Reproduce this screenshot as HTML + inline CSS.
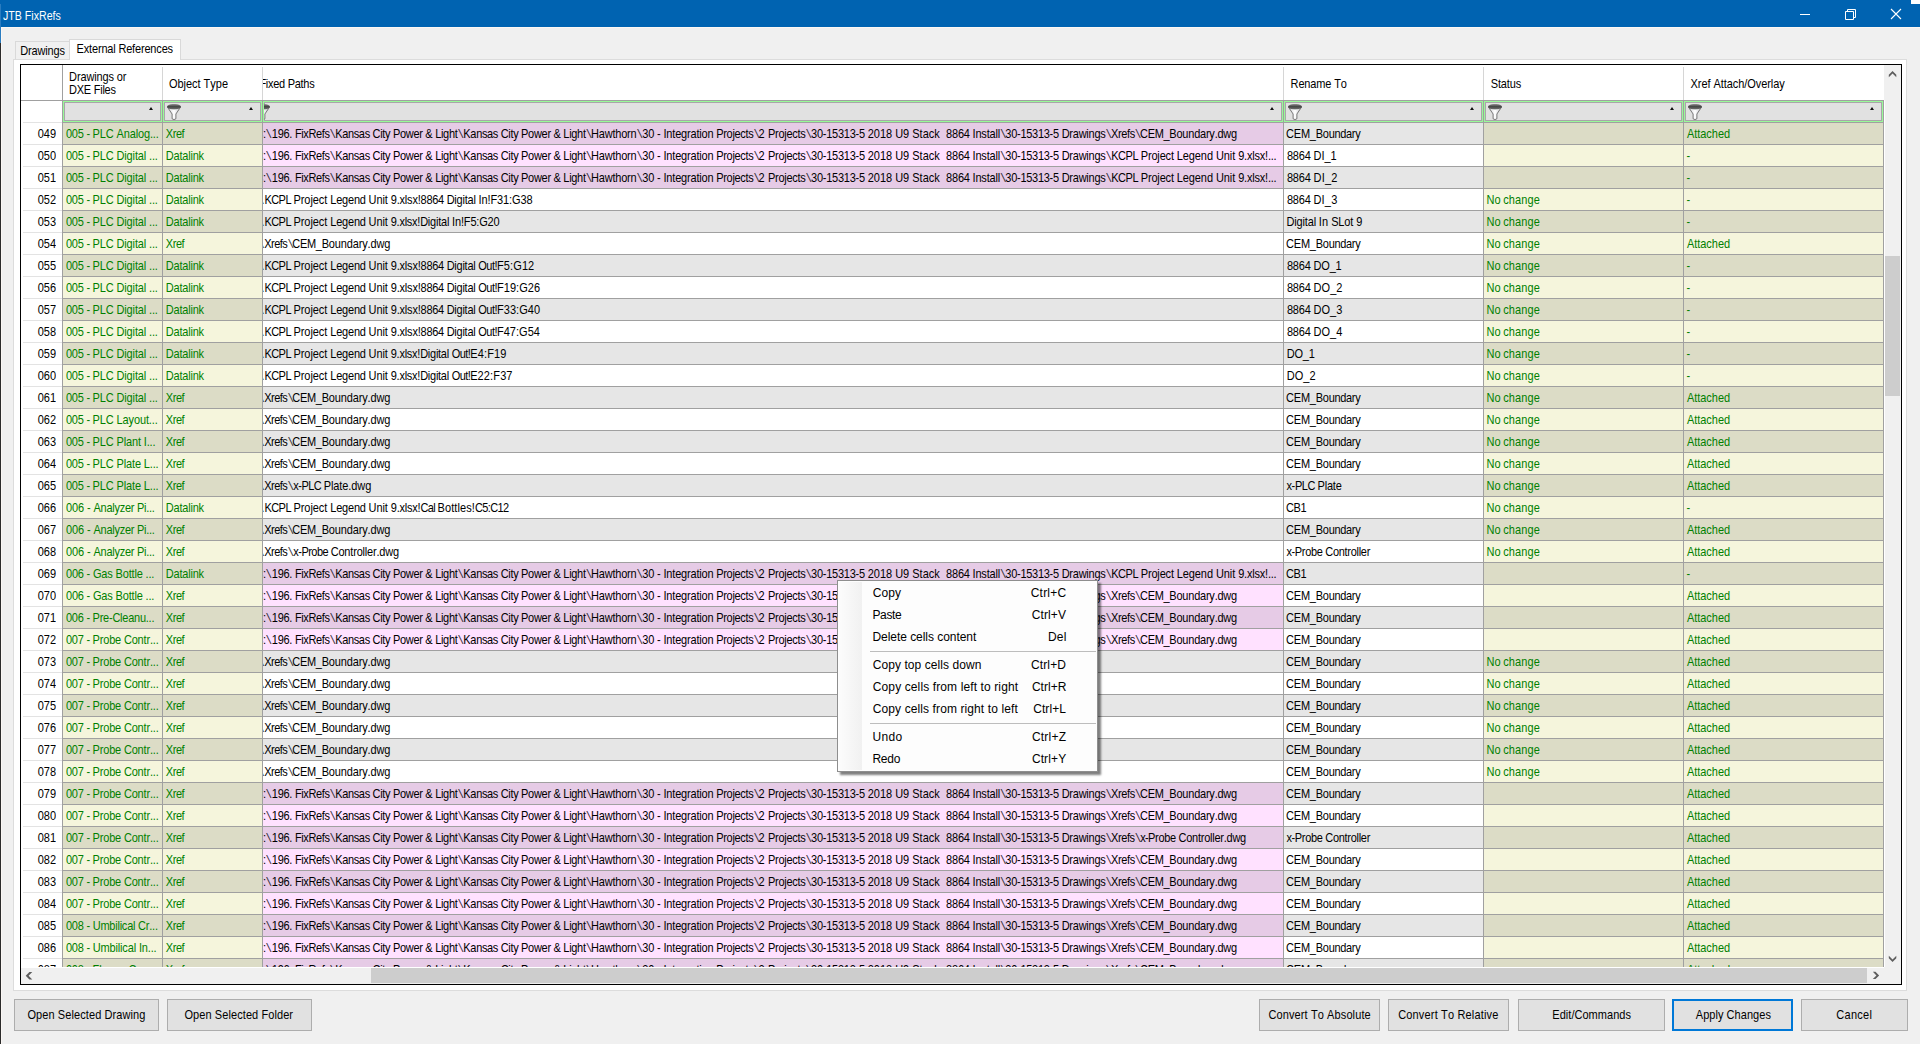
<!DOCTYPE html>
<html lang="en"><head><meta charset="utf-8"><title>JTB FixRefs</title>
<style>
html,body{margin:0;padding:0}
body{width:1920px;height:1044px;position:relative;overflow:hidden;background:#f0f0f0;font:11px "Liberation Sans",sans-serif;color:#000;font-kerning:none}
div,span{box-sizing:border-box}
.a{position:absolute}
#title{left:0;top:0;width:1920px;height:27px;background:#0063b1}
#title .t{top:7px;font-size:12px;line-height:18px;color:#fff;white-space:pre}
.tab{border:1px solid #d9d9d9;border-bottom:none}
.tx{position:absolute;white-space:pre;transform:scaleY(1.14);transform-origin:0 10px}
#page{left:13px;top:59px;width:1894px;height:932px;background:#fff;border:1px solid #dcdcdc}
#grid{left:20px;top:64px;width:1882px;height:921px;border:1px solid #000;background:#fff;overflow:hidden}
.vl{position:absolute;width:1px;background:#a0a0a0}
.hl{position:absolute;height:1px;background:#a0a0a0}
.hd{position:absolute;white-space:pre;line-height:13px;transform:scaleY(1.14);transform-origin:0 10px}
.fc{position:absolute;top:101px;height:21px;border:1px solid #98fb98;background:#e1e1e1;box-shadow:inset 0 0 0 1px #a9a5a9;overflow:hidden}
.fc svg{position:absolute;top:2px}
.fc i{position:absolute;right:8px;top:5px;width:0;height:0;border-left:2px solid transparent;border-right:2px solid transparent;border-bottom:3px solid #111}
.r{position:absolute;left:0;width:1884px;height:22px}
.r>div{position:absolute;top:1px;height:21px;overflow:hidden}
.r>div>b{position:absolute;top:1px;line-height:21px;white-space:pre;font-weight:normal;transform:scaleY(1.14);transform-origin:0 14px}
.r>.n{left:23px;width:39px;top:0;height:22px;border-top:1px solid #e3e3e3}
.n>b{right:6px}
.g{color:#008000}
.r i{font-family:"Liberation Mono",monospace;font-style:normal;opacity:.82}
.c1{left:63px;width:99px}
.c2{left:163px;width:99px}
.c3{left:263px;width:1020px}
.c4{left:1284px;width:199px}
.c5{left:1484px;width:199px}
.c6{left:1684px;width:199px}
.o .c1,.o .c2,.o .c5,.o .c6{background:#dcdcc6}
.e .c1,.e .c2,.e .c5,.e .c6{background:#f5f5dc}
.o .c3,.o .c4{background:#e6e6e6}
.e .c3,.e .c4{background:#fff}
.o .p{background:#e6cbe6}
.e .p{background:#ffe1ff}
.btn{position:absolute;top:999px;height:32px;border:1px solid #adadad;background:#e1e1e1}
.btn b{position:absolute;top:0;line-height:30px;white-space:pre;font-weight:normal;transform:scaleY(1.14);transform-origin:0 19px}
#menu{left:837px;top:580px;width:261px;height:192px;border:1px solid #8e8e8e;background:#fdfdfd;box-shadow:3px 3px 2px 0 rgba(0,0,0,.5);font-size:12px}
#menu .gut{left:1px;top:1px;width:23px;height:188px;background:linear-gradient(90deg,#fcfcfc,#f1f1f1)}
#menu .mi{position:absolute;left:0;width:259px;height:22px;line-height:21px;white-space:pre}
#menu .mi b{position:absolute;top:1px;font-weight:normal}
#menu .sep{position:absolute;left:32px;width:226px;height:1px;background:#bdbdbd}
</style></head>
<body>
<div id="title" class="a"><div class="a t" style="left:2.6px;transform:scaleX(.885);transform-origin:0 0">JTB FixRefs</div>
<svg class="a" style="left:1790px;top:0" width="130" height="27" viewBox="1790 0 130 27" fill="none" stroke="#fff" stroke-width="1"><path d="M1800 14.5h10"/><path d="M1845.5 11.5h8v8h-8z"/><path d="M1847.5 11.5v-2h8v8h-2"/><path d="M1891 9l10 10M1901 9l-10 10" stroke-width="1.1"/><rect x="1911" y="0" width="9" height="4" fill="#fff" stroke="none"/></svg>
</div>
<div class="a" style="left:0;top:4px;width:1px;height:39px;background:#2a7cc0"></div><div class="a" style="left:0;top:43px;width:1px;height:1001px;background:#2b2b2b"></div>
<div class="a" style="left:1px;top:27px;width:1919px;height:1px;background:#fbf7f4"></div><div class="a" style="left:1px;top:27px;width:1px;height:1017px;background:#fbf7f4"></div>
<div id="page" class="a"></div>
<div class="a tab" style="left:15px;top:41px;width:55px;height:18px;background:#f0f0f0"></div><div class="a tab" style="left:69px;top:39px;width:112px;height:21px;background:#fff"></div>
<div class="tx" style="left:20.35px;top:45px;line-height:13px"><span style="letter-spacing:-0.175px">Drawings</span></div><div class="tx" style="left:76.60px;top:43px;line-height:13px"><span style="letter-spacing:-0.177px">External References</span></div>
<div id="grid" class="a"></div>
<div class="a" style="left:0;top:0;width:1884px;height:967px;overflow:hidden">
<div class="hd" style="left:69.10px;top:71px"><span style="letter-spacing:-0.145px">Drawings or</span></div><div class="hd" style="left:69.10px;top:84px"><span style="letter-spacing:-0.255px">DXE Files</span></div><div class="hd" style="left:168.88px;top:78px"><span style="letter-spacing:-0.017px">Object Type</span></div><div class="a" style="left:263px;top:66px;width:1020px;height:34px;overflow:hidden"><div class="hd" style="left:-3.57px;top:12px"><span style="letter-spacing:-0.283px">Fixed Paths</span></div></div><div class="hd" style="left:1290.60px;top:78px"><span style="letter-spacing:-0.151px">Rename To</span></div><div class="hd" style="left:1490.75px;top:78px"><span style="letter-spacing:-0.156px">Status</span></div><div class="hd" style="left:1690.55px;top:78px"><span style="letter-spacing:-0.063px">Xref Attach/Overlay</span></div>
<div class="vl" style="left:162px;top:67px;height:33px;background:#d6d6d6"></div><div class="vl" style="left:262px;top:67px;height:33px;background:#d6d6d6"></div><div class="vl" style="left:1283px;top:67px;height:33px;background:#d6d6d6"></div><div class="vl" style="left:1483px;top:67px;height:33px;background:#d6d6d6"></div><div class="vl" style="left:1683px;top:67px;height:33px;background:#d6d6d6"></div>
<div class="fc" style="left:63px;width:99px"><i></i></div><div class="fc" style="left:163px;width:99px"><svg width="14" height="16" viewBox="0 0 14 16" style="left:3px"><defs><linearGradient id="fg1" x1="0" y1="0" x2="0" y2="1"><stop offset="0" stop-color="#939393"/><stop offset=".45" stop-color="#484848"/><stop offset=".8" stop-color="#5c5c5c"/><stop offset="1" stop-color="#8e8e8e"/></linearGradient><linearGradient id="fh1" x1="0" y1="0" x2="1" y2="0"><stop offset="0" stop-color="#cfcfd4"/><stop offset=".5" stop-color="#ffffff"/><stop offset="1" stop-color="#c4c4ca"/></linearGradient></defs><path d="M0.5 3.2 L5.1 10 L5.1 14.8 Q7 16.4 8.9 14.8 L8.9 10 L13.5 3.2 Z" fill="url(#fh1)" stroke="#6c6c6c" stroke-width=".9"/><ellipse cx="7" cy="2.7" rx="7" ry="2.75" fill="url(#fg1)"/></svg><i></i></div><div class="fc" style="left:263px;width:1020px"><svg width="14" height="16" viewBox="0 0 14 16" style="left:-8px"><defs><linearGradient id="fg2" x1="0" y1="0" x2="0" y2="1"><stop offset="0" stop-color="#939393"/><stop offset=".45" stop-color="#484848"/><stop offset=".8" stop-color="#5c5c5c"/><stop offset="1" stop-color="#8e8e8e"/></linearGradient><linearGradient id="fh2" x1="0" y1="0" x2="1" y2="0"><stop offset="0" stop-color="#cfcfd4"/><stop offset=".5" stop-color="#ffffff"/><stop offset="1" stop-color="#c4c4ca"/></linearGradient></defs><path d="M0.5 3.2 L5.1 10 L5.1 14.8 Q7 16.4 8.9 14.8 L8.9 10 L13.5 3.2 Z" fill="url(#fh2)" stroke="#6c6c6c" stroke-width=".9"/><ellipse cx="7" cy="2.7" rx="7" ry="2.75" fill="url(#fg2)"/></svg><i></i></div><div class="fc" style="left:1284px;width:199px"><svg width="14" height="16" viewBox="0 0 14 16" style="left:3px"><defs><linearGradient id="fg3" x1="0" y1="0" x2="0" y2="1"><stop offset="0" stop-color="#939393"/><stop offset=".45" stop-color="#484848"/><stop offset=".8" stop-color="#5c5c5c"/><stop offset="1" stop-color="#8e8e8e"/></linearGradient><linearGradient id="fh3" x1="0" y1="0" x2="1" y2="0"><stop offset="0" stop-color="#cfcfd4"/><stop offset=".5" stop-color="#ffffff"/><stop offset="1" stop-color="#c4c4ca"/></linearGradient></defs><path d="M0.5 3.2 L5.1 10 L5.1 14.8 Q7 16.4 8.9 14.8 L8.9 10 L13.5 3.2 Z" fill="url(#fh3)" stroke="#6c6c6c" stroke-width=".9"/><ellipse cx="7" cy="2.7" rx="7" ry="2.75" fill="url(#fg3)"/></svg><i></i></div><div class="fc" style="left:1484px;width:199px"><svg width="14" height="16" viewBox="0 0 14 16" style="left:3px"><defs><linearGradient id="fg4" x1="0" y1="0" x2="0" y2="1"><stop offset="0" stop-color="#939393"/><stop offset=".45" stop-color="#484848"/><stop offset=".8" stop-color="#5c5c5c"/><stop offset="1" stop-color="#8e8e8e"/></linearGradient><linearGradient id="fh4" x1="0" y1="0" x2="1" y2="0"><stop offset="0" stop-color="#cfcfd4"/><stop offset=".5" stop-color="#ffffff"/><stop offset="1" stop-color="#c4c4ca"/></linearGradient></defs><path d="M0.5 3.2 L5.1 10 L5.1 14.8 Q7 16.4 8.9 14.8 L8.9 10 L13.5 3.2 Z" fill="url(#fh4)" stroke="#6c6c6c" stroke-width=".9"/><ellipse cx="7" cy="2.7" rx="7" ry="2.75" fill="url(#fg4)"/></svg><i></i></div><div class="fc" style="left:1684px;width:199px"><svg width="14" height="16" viewBox="0 0 14 16" style="left:3px"><defs><linearGradient id="fg5" x1="0" y1="0" x2="0" y2="1"><stop offset="0" stop-color="#939393"/><stop offset=".45" stop-color="#484848"/><stop offset=".8" stop-color="#5c5c5c"/><stop offset="1" stop-color="#8e8e8e"/></linearGradient><linearGradient id="fh5" x1="0" y1="0" x2="1" y2="0"><stop offset="0" stop-color="#cfcfd4"/><stop offset=".5" stop-color="#ffffff"/><stop offset="1" stop-color="#c4c4ca"/></linearGradient></defs><path d="M0.5 3.2 L5.1 10 L5.1 14.8 Q7 16.4 8.9 14.8 L8.9 10 L13.5 3.2 Z" fill="url(#fh5)" stroke="#6c6c6c" stroke-width=".9"/><ellipse cx="7" cy="2.7" rx="7" ry="2.75" fill="url(#fg5)"/></svg><i></i></div>
<div class="r o" style="top:122px"><div class="n"><b>049</b></div><div class="c1 g"><b style="left:2.97px"><span style="letter-spacing:-0.250px">005 - </span><span style="letter-spacing:-0.144px">PLC Analog...</span></b></div><div class="c2 g"><b style="left:2.75px"><span style="letter-spacing:-0.423px">Xref</span></b></div><div class="c3 p"><b style="left:-7.48px"><span style="letter-spacing:-0.469px">C:</span><span style="letter-spacing:-0.421px"><i>\</i></span><span style="letter-spacing:-0.266px">196. </span><span style="letter-spacing:-0.371px">FixRefs</span><span style="letter-spacing:-1.086px"><i>\</i></span><span style="letter-spacing:-0.333px">Kansas City </span><span style="letter-spacing:-0.296px">Power &amp; Light</span><span style="letter-spacing:-0.786px"><i>\</i></span><span style="letter-spacing:-0.337px">Kansas City </span><span style="letter-spacing:-0.296px">Power &amp; Light</span><span style="letter-spacing:-1.236px"><i>\</i></span><span style="letter-spacing:-0.224px">Hawthorn</span><span style="letter-spacing:-0.702px"><i>\</i></span><span style="letter-spacing:-0.161px">30 - </span><span style="letter-spacing:-0.194px">Integration </span><span style="letter-spacing:-0.306px">Projects</span><span style="letter-spacing:-1.537px"><i>\</i></span><span style="letter-spacing:0.114px">2 </span><span style="letter-spacing:-0.275px">Projects</span><span style="letter-spacing:-1.152px"><i>\</i></span><span style="letter-spacing:-0.237px">30-15313-5 </span><span style="letter-spacing:-0.024px">2018 U9 </span><span style="letter-spacing:0.043px">Stack  </span><span style="letter-spacing:-0.208px">8864 Install</span><span style="letter-spacing:-1.202px"><i>\</i></span><span style="letter-spacing:-0.273px">30-15313-5 </span><span style="letter-spacing:-0.233px">Drawings</span><span style="letter-spacing:-1.230px"><i>\</i></span><span style="letter-spacing:-0.369px">Xrefs</span><span style="letter-spacing:-1.442px"><i>\</i></span><span style="letter-spacing:-0.301px">CEM_</span><span style="letter-spacing:-0.226px">Boundary.dwg</span></b></div><div class="c4"><b style="left:2.04px"><span style="letter-spacing:-0.201px">CEM_</span><span style="letter-spacing:-0.308px">Boundary</span></b></div><div class="c5 g"></div><div class="c6 g"><b style="left:2.88px"><span style="letter-spacing:-0.024px">Attached</span></b></div></div>
<div class="r e" style="top:144px"><div class="n"><b>050</b></div><div class="c1 g"><b style="left:2.97px"><span style="letter-spacing:-0.250px">005 - </span><span style="letter-spacing:-0.139px">PLC Digital ...</span></b></div><div class="c2 g"><b style="left:2.85px"><span style="letter-spacing:-0.213px">Datalink</span></b></div><div class="c3 p"><b style="left:-7.48px"><span style="letter-spacing:-0.469px">C:</span><span style="letter-spacing:-0.421px"><i>\</i></span><span style="letter-spacing:-0.266px">196. </span><span style="letter-spacing:-0.371px">FixRefs</span><span style="letter-spacing:-1.086px"><i>\</i></span><span style="letter-spacing:-0.333px">Kansas City </span><span style="letter-spacing:-0.296px">Power &amp; Light</span><span style="letter-spacing:-0.786px"><i>\</i></span><span style="letter-spacing:-0.337px">Kansas City </span><span style="letter-spacing:-0.296px">Power &amp; Light</span><span style="letter-spacing:-1.236px"><i>\</i></span><span style="letter-spacing:-0.224px">Hawthorn</span><span style="letter-spacing:-0.702px"><i>\</i></span><span style="letter-spacing:-0.161px">30 - </span><span style="letter-spacing:-0.194px">Integration </span><span style="letter-spacing:-0.306px">Projects</span><span style="letter-spacing:-1.537px"><i>\</i></span><span style="letter-spacing:0.114px">2 </span><span style="letter-spacing:-0.275px">Projects</span><span style="letter-spacing:-1.152px"><i>\</i></span><span style="letter-spacing:-0.237px">30-15313-5 </span><span style="letter-spacing:-0.024px">2018 U9 </span><span style="letter-spacing:0.043px">Stack  </span><span style="letter-spacing:-0.208px">8864 Install</span><span style="letter-spacing:-1.202px"><i>\</i></span><span style="letter-spacing:-0.273px">30-15313-5 </span><span style="letter-spacing:-0.233px">Drawings</span><span style="letter-spacing:-1.086px"><i>\</i></span><span style="letter-spacing:-0.438px">KCPL </span><span style="letter-spacing:-0.161px">Project </span><span style="letter-spacing:-0.087px">Legend </span><span style="letter-spacing:-0.077px">Unit </span><span style="letter-spacing:-0.202px">9.xlsx!...</span></b></div><div class="c4"><b style="left:2.92px"><span style="letter-spacing:-0.190px">8864 </span><span style="letter-spacing:-0.049px">DI_1</span></b></div><div class="c5 g"></div><div class="c6 g"><b style="left:2.51px"><span style="letter-spacing:0.314px">-</span></b></div></div>
<div class="r o" style="top:166px"><div class="n"><b>051</b></div><div class="c1 g"><b style="left:2.97px"><span style="letter-spacing:-0.250px">005 - </span><span style="letter-spacing:-0.139px">PLC Digital ...</span></b></div><div class="c2 g"><b style="left:2.85px"><span style="letter-spacing:-0.213px">Datalink</span></b></div><div class="c3 p"><b style="left:-7.48px"><span style="letter-spacing:-0.469px">C:</span><span style="letter-spacing:-0.421px"><i>\</i></span><span style="letter-spacing:-0.266px">196. </span><span style="letter-spacing:-0.371px">FixRefs</span><span style="letter-spacing:-1.086px"><i>\</i></span><span style="letter-spacing:-0.333px">Kansas City </span><span style="letter-spacing:-0.296px">Power &amp; Light</span><span style="letter-spacing:-0.786px"><i>\</i></span><span style="letter-spacing:-0.337px">Kansas City </span><span style="letter-spacing:-0.296px">Power &amp; Light</span><span style="letter-spacing:-1.236px"><i>\</i></span><span style="letter-spacing:-0.224px">Hawthorn</span><span style="letter-spacing:-0.702px"><i>\</i></span><span style="letter-spacing:-0.161px">30 - </span><span style="letter-spacing:-0.194px">Integration </span><span style="letter-spacing:-0.306px">Projects</span><span style="letter-spacing:-1.537px"><i>\</i></span><span style="letter-spacing:0.114px">2 </span><span style="letter-spacing:-0.275px">Projects</span><span style="letter-spacing:-1.152px"><i>\</i></span><span style="letter-spacing:-0.237px">30-15313-5 </span><span style="letter-spacing:-0.024px">2018 U9 </span><span style="letter-spacing:0.043px">Stack  </span><span style="letter-spacing:-0.208px">8864 Install</span><span style="letter-spacing:-1.202px"><i>\</i></span><span style="letter-spacing:-0.273px">30-15313-5 </span><span style="letter-spacing:-0.233px">Drawings</span><span style="letter-spacing:-1.086px"><i>\</i></span><span style="letter-spacing:-0.438px">KCPL </span><span style="letter-spacing:-0.161px">Project </span><span style="letter-spacing:-0.087px">Legend </span><span style="letter-spacing:-0.077px">Unit </span><span style="letter-spacing:-0.202px">9.xlsx!...</span></b></div><div class="c4"><b style="left:2.92px"><span style="letter-spacing:-0.190px">8864 </span><span style="letter-spacing:0.205px">DI_2</span></b></div><div class="c5 g"></div><div class="c6 g"><b style="left:2.51px"><span style="letter-spacing:0.314px">-</span></b></div></div>
<div class="r e" style="top:188px"><div class="n"><b>052</b></div><div class="c1 g"><b style="left:2.97px"><span style="letter-spacing:-0.250px">005 - </span><span style="letter-spacing:-0.139px">PLC Digital ...</span></b></div><div class="c2 g"><b style="left:2.85px"><span style="letter-spacing:-0.213px">Datalink</span></b></div><div class="c3"><b style="left:-11.36px"><span style="letter-spacing:0.014px">..<i>\</i></span><span style="letter-spacing:-0.538px">KCPL </span><span style="letter-spacing:-0.074px">Project </span><span style="letter-spacing:-0.201px">Legend </span><span style="letter-spacing:-0.087px">Unit </span><span style="letter-spacing:-0.198px">9.xlsx!</span><span style="letter-spacing:-0.290px">8864 </span><span style="letter-spacing:-0.217px">Digital </span><span style="letter-spacing:-0.122px">In!</span><span style="letter-spacing:-0.110px">F31:G38</span></b></div><div class="c4"><b style="left:2.92px"><span style="letter-spacing:-0.190px">8864 </span><span style="letter-spacing:0.188px">DI_3</span></b></div><div class="c5 g"><b style="left:2.60px"><span style="letter-spacing:-0.144px">No </span><span style="letter-spacing:0.086px">change</span></b></div><div class="c6 g"><b style="left:2.51px"><span style="letter-spacing:0.314px">-</span></b></div></div>
<div class="r o" style="top:210px"><div class="n"><b>053</b></div><div class="c1 g"><b style="left:2.97px"><span style="letter-spacing:-0.250px">005 - </span><span style="letter-spacing:-0.139px">PLC Digital ...</span></b></div><div class="c2 g"><b style="left:2.85px"><span style="letter-spacing:-0.213px">Datalink</span></b></div><div class="c3"><b style="left:-11.36px"><span style="letter-spacing:0.014px">..<i>\</i></span><span style="letter-spacing:-0.538px">KCPL </span><span style="letter-spacing:-0.074px">Project </span><span style="letter-spacing:-0.201px">Legend </span><span style="letter-spacing:-0.087px">Unit </span><span style="letter-spacing:-0.259px">9.xlsx!</span><span style="letter-spacing:-0.217px">Digital </span><span style="letter-spacing:-0.139px">In!</span><span style="letter-spacing:-0.175px">F5:G20</span></b></div><div class="c4"><b style="left:2.60px"><span style="letter-spacing:-0.179px">Digital </span><span style="letter-spacing:0.029px">In </span><span style="letter-spacing:-0.130px">SLot 9</span></b></div><div class="c5 g"><b style="left:2.60px"><span style="letter-spacing:-0.144px">No </span><span style="letter-spacing:0.086px">change</span></b></div><div class="c6 g"><b style="left:2.51px"><span style="letter-spacing:0.314px">-</span></b></div></div>
<div class="r e" style="top:232px"><div class="n"><b>054</b></div><div class="c1 g"><b style="left:2.97px"><span style="letter-spacing:-0.250px">005 - </span><span style="letter-spacing:-0.139px">PLC Digital ...</span></b></div><div class="c2 g"><b style="left:2.75px"><span style="letter-spacing:-0.423px">Xref</span></b></div><div class="c3"><b style="left:-7.58px"><span style="letter-spacing:-0.481px">.<i>\</i>Xrefs</span><span style="letter-spacing:-1.742px"><i>\</i></span><span style="letter-spacing:-0.301px">CEM_</span><span style="letter-spacing:-0.151px">Boundary.dwg</span></b></div><div class="c4"><b style="left:2.04px"><span style="letter-spacing:-0.201px">CEM_</span><span style="letter-spacing:-0.308px">Boundary</span></b></div><div class="c5 g"><b style="left:2.60px"><span style="letter-spacing:-0.144px">No </span><span style="letter-spacing:0.086px">change</span></b></div><div class="c6 g"><b style="left:2.88px"><span style="letter-spacing:-0.024px">Attached</span></b></div></div>
<div class="r o" style="top:254px"><div class="n"><b>055</b></div><div class="c1 g"><b style="left:2.97px"><span style="letter-spacing:-0.250px">005 - </span><span style="letter-spacing:-0.139px">PLC Digital ...</span></b></div><div class="c2 g"><b style="left:2.85px"><span style="letter-spacing:-0.213px">Datalink</span></b></div><div class="c3"><b style="left:-11.36px"><span style="letter-spacing:0.014px">..<i>\</i></span><span style="letter-spacing:-0.538px">KCPL </span><span style="letter-spacing:-0.074px">Project </span><span style="letter-spacing:-0.201px">Legend </span><span style="letter-spacing:-0.087px">Unit </span><span style="letter-spacing:-0.198px">9.xlsx!</span><span style="letter-spacing:-0.290px">8864 </span><span style="letter-spacing:-0.249px">Digital </span><span style="letter-spacing:-0.529px">Out!</span><span style="letter-spacing:0.120px">F5:G12</span></b></div><div class="c4"><b style="left:2.92px"><span style="letter-spacing:-0.190px">8864 </span><span style="letter-spacing:-0.174px">DO_1</span></b></div><div class="c5 g"><b style="left:2.60px"><span style="letter-spacing:-0.144px">No </span><span style="letter-spacing:0.086px">change</span></b></div><div class="c6 g"><b style="left:2.51px"><span style="letter-spacing:0.314px">-</span></b></div></div>
<div class="r e" style="top:276px"><div class="n"><b>056</b></div><div class="c1 g"><b style="left:2.97px"><span style="letter-spacing:-0.250px">005 - </span><span style="letter-spacing:-0.139px">PLC Digital ...</span></b></div><div class="c2 g"><b style="left:2.85px"><span style="letter-spacing:-0.213px">Datalink</span></b></div><div class="c3"><b style="left:-11.36px"><span style="letter-spacing:0.014px">..<i>\</i></span><span style="letter-spacing:-0.538px">KCPL </span><span style="letter-spacing:-0.074px">Project </span><span style="letter-spacing:-0.201px">Legend </span><span style="letter-spacing:-0.087px">Unit </span><span style="letter-spacing:-0.198px">9.xlsx!</span><span style="letter-spacing:-0.290px">8864 </span><span style="letter-spacing:-0.249px">Digital </span><span style="letter-spacing:-0.529px">Out!</span><span style="letter-spacing:0.055px">F19:G26</span></b></div><div class="c4"><b style="left:2.92px"><span style="letter-spacing:-0.190px">8864 </span><span style="letter-spacing:0.080px">DO_2</span></b></div><div class="c5 g"><b style="left:2.60px"><span style="letter-spacing:-0.144px">No </span><span style="letter-spacing:0.086px">change</span></b></div><div class="c6 g"><b style="left:2.51px"><span style="letter-spacing:0.314px">-</span></b></div></div>
<div class="r o" style="top:298px"><div class="n"><b>057</b></div><div class="c1 g"><b style="left:2.97px"><span style="letter-spacing:-0.250px">005 - </span><span style="letter-spacing:-0.139px">PLC Digital ...</span></b></div><div class="c2 g"><b style="left:2.85px"><span style="letter-spacing:-0.213px">Datalink</span></b></div><div class="c3"><b style="left:-11.36px"><span style="letter-spacing:0.014px">..<i>\</i></span><span style="letter-spacing:-0.538px">KCPL </span><span style="letter-spacing:-0.074px">Project </span><span style="letter-spacing:-0.201px">Legend </span><span style="letter-spacing:-0.087px">Unit </span><span style="letter-spacing:-0.198px">9.xlsx!</span><span style="letter-spacing:-0.290px">8864 </span><span style="letter-spacing:-0.249px">Digital </span><span style="letter-spacing:-0.529px">Out!</span><span style="letter-spacing:0.047px">F33:G40</span></b></div><div class="c4"><b style="left:2.92px"><span style="letter-spacing:-0.190px">8864 </span><span style="letter-spacing:0.063px">DO_3</span></b></div><div class="c5 g"><b style="left:2.60px"><span style="letter-spacing:-0.144px">No </span><span style="letter-spacing:0.086px">change</span></b></div><div class="c6 g"><b style="left:2.51px"><span style="letter-spacing:0.314px">-</span></b></div></div>
<div class="r e" style="top:320px"><div class="n"><b>058</b></div><div class="c1 g"><b style="left:2.97px"><span style="letter-spacing:-0.250px">005 - </span><span style="letter-spacing:-0.139px">PLC Digital ...</span></b></div><div class="c2 g"><b style="left:2.85px"><span style="letter-spacing:-0.213px">Datalink</span></b></div><div class="c3"><b style="left:-11.36px"><span style="letter-spacing:0.014px">..<i>\</i></span><span style="letter-spacing:-0.538px">KCPL </span><span style="letter-spacing:-0.074px">Project </span><span style="letter-spacing:-0.201px">Legend </span><span style="letter-spacing:-0.087px">Unit </span><span style="letter-spacing:-0.198px">9.xlsx!</span><span style="letter-spacing:-0.290px">8864 </span><span style="letter-spacing:-0.249px">Digital </span><span style="letter-spacing:-0.529px">Out!</span><span style="letter-spacing:0.032px">F47:G54</span></b></div><div class="c4"><b style="left:2.92px"><span style="letter-spacing:-0.190px">8864 </span><span style="letter-spacing:0.022px">DO_4</span></b></div><div class="c5 g"><b style="left:2.60px"><span style="letter-spacing:-0.144px">No </span><span style="letter-spacing:0.086px">change</span></b></div><div class="c6 g"><b style="left:2.51px"><span style="letter-spacing:0.314px">-</span></b></div></div>
<div class="r o" style="top:342px"><div class="n"><b>059</b></div><div class="c1 g"><b style="left:2.97px"><span style="letter-spacing:-0.250px">005 - </span><span style="letter-spacing:-0.139px">PLC Digital ...</span></b></div><div class="c2 g"><b style="left:2.85px"><span style="letter-spacing:-0.213px">Datalink</span></b></div><div class="c3"><b style="left:-11.36px"><span style="letter-spacing:0.014px">..<i>\</i></span><span style="letter-spacing:-0.538px">KCPL </span><span style="letter-spacing:-0.074px">Project </span><span style="letter-spacing:-0.201px">Legend </span><span style="letter-spacing:-0.087px">Unit </span><span style="letter-spacing:-0.259px">9.xlsx!</span><span style="letter-spacing:-0.255px">Digital </span><span style="letter-spacing:-0.592px">Out!</span><span style="letter-spacing:0.160px">E4:F19</span></b></div><div class="c4"><b style="left:2.70px"><span style="letter-spacing:-0.224px">DO_1</span></b></div><div class="c5 g"><b style="left:2.60px"><span style="letter-spacing:-0.144px">No </span><span style="letter-spacing:0.086px">change</span></b></div><div class="c6 g"><b style="left:2.51px"><span style="letter-spacing:0.314px">-</span></b></div></div>
<div class="r e" style="top:364px"><div class="n"><b>060</b></div><div class="c1 g"><b style="left:2.97px"><span style="letter-spacing:-0.250px">005 - </span><span style="letter-spacing:-0.139px">PLC Digital ...</span></b></div><div class="c2 g"><b style="left:2.85px"><span style="letter-spacing:-0.213px">Datalink</span></b></div><div class="c3"><b style="left:-11.36px"><span style="letter-spacing:0.014px">..<i>\</i></span><span style="letter-spacing:-0.538px">KCPL </span><span style="letter-spacing:-0.074px">Project </span><span style="letter-spacing:-0.201px">Legend </span><span style="letter-spacing:-0.087px">Unit </span><span style="letter-spacing:-0.259px">9.xlsx!</span><span style="letter-spacing:-0.255px">Digital </span><span style="letter-spacing:-0.592px">Out!</span><span style="letter-spacing:0.125px">E22:F37</span></b></div><div class="c4"><b style="left:2.70px"><span style="letter-spacing:0.030px">DO_2</span></b></div><div class="c5 g"><b style="left:2.60px"><span style="letter-spacing:-0.144px">No </span><span style="letter-spacing:0.086px">change</span></b></div><div class="c6 g"><b style="left:2.51px"><span style="letter-spacing:0.314px">-</span></b></div></div>
<div class="r o" style="top:386px"><div class="n"><b>061</b></div><div class="c1 g"><b style="left:2.97px"><span style="letter-spacing:-0.250px">005 - </span><span style="letter-spacing:-0.139px">PLC Digital ...</span></b></div><div class="c2 g"><b style="left:2.75px"><span style="letter-spacing:-0.423px">Xref</span></b></div><div class="c3"><b style="left:-7.58px"><span style="letter-spacing:-0.481px">.<i>\</i>Xrefs</span><span style="letter-spacing:-1.742px"><i>\</i></span><span style="letter-spacing:-0.301px">CEM_</span><span style="letter-spacing:-0.151px">Boundary.dwg</span></b></div><div class="c4"><b style="left:2.04px"><span style="letter-spacing:-0.201px">CEM_</span><span style="letter-spacing:-0.308px">Boundary</span></b></div><div class="c5 g"><b style="left:2.60px"><span style="letter-spacing:-0.144px">No </span><span style="letter-spacing:0.086px">change</span></b></div><div class="c6 g"><b style="left:2.88px"><span style="letter-spacing:-0.024px">Attached</span></b></div></div>
<div class="r e" style="top:408px"><div class="n"><b>062</b></div><div class="c1 g"><b style="left:2.97px"><span style="letter-spacing:-0.250px">005 - </span><span style="letter-spacing:-0.126px">PLC Layout...</span></b></div><div class="c2 g"><b style="left:2.75px"><span style="letter-spacing:-0.423px">Xref</span></b></div><div class="c3"><b style="left:-7.58px"><span style="letter-spacing:-0.481px">.<i>\</i>Xrefs</span><span style="letter-spacing:-1.742px"><i>\</i></span><span style="letter-spacing:-0.301px">CEM_</span><span style="letter-spacing:-0.151px">Boundary.dwg</span></b></div><div class="c4"><b style="left:2.04px"><span style="letter-spacing:-0.201px">CEM_</span><span style="letter-spacing:-0.308px">Boundary</span></b></div><div class="c5 g"><b style="left:2.60px"><span style="letter-spacing:-0.144px">No </span><span style="letter-spacing:0.086px">change</span></b></div><div class="c6 g"><b style="left:2.88px"><span style="letter-spacing:-0.024px">Attached</span></b></div></div>
<div class="r o" style="top:430px"><div class="n"><b>063</b></div><div class="c1 g"><b style="left:2.97px"><span style="letter-spacing:-0.250px">005 - </span><span style="letter-spacing:-0.143px">PLC Plant I...</span></b></div><div class="c2 g"><b style="left:2.75px"><span style="letter-spacing:-0.423px">Xref</span></b></div><div class="c3"><b style="left:-7.58px"><span style="letter-spacing:-0.481px">.<i>\</i>Xrefs</span><span style="letter-spacing:-1.742px"><i>\</i></span><span style="letter-spacing:-0.301px">CEM_</span><span style="letter-spacing:-0.151px">Boundary.dwg</span></b></div><div class="c4"><b style="left:2.04px"><span style="letter-spacing:-0.201px">CEM_</span><span style="letter-spacing:-0.308px">Boundary</span></b></div><div class="c5 g"><b style="left:2.60px"><span style="letter-spacing:-0.144px">No </span><span style="letter-spacing:0.086px">change</span></b></div><div class="c6 g"><b style="left:2.88px"><span style="letter-spacing:-0.024px">Attached</span></b></div></div>
<div class="r e" style="top:452px"><div class="n"><b>064</b></div><div class="c1 g"><b style="left:2.97px"><span style="letter-spacing:-0.250px">005 - </span><span style="letter-spacing:-0.140px">PLC Plate L...</span></b></div><div class="c2 g"><b style="left:2.75px"><span style="letter-spacing:-0.423px">Xref</span></b></div><div class="c3"><b style="left:-7.58px"><span style="letter-spacing:-0.481px">.<i>\</i>Xrefs</span><span style="letter-spacing:-1.742px"><i>\</i></span><span style="letter-spacing:-0.301px">CEM_</span><span style="letter-spacing:-0.151px">Boundary.dwg</span></b></div><div class="c4"><b style="left:2.04px"><span style="letter-spacing:-0.201px">CEM_</span><span style="letter-spacing:-0.308px">Boundary</span></b></div><div class="c5 g"><b style="left:2.60px"><span style="letter-spacing:-0.144px">No </span><span style="letter-spacing:0.086px">change</span></b></div><div class="c6 g"><b style="left:2.88px"><span style="letter-spacing:-0.024px">Attached</span></b></div></div>
<div class="r o" style="top:474px"><div class="n"><b>065</b></div><div class="c1 g"><b style="left:2.97px"><span style="letter-spacing:-0.250px">005 - </span><span style="letter-spacing:-0.140px">PLC Plate L...</span></b></div><div class="c2 g"><b style="left:2.75px"><span style="letter-spacing:-0.423px">Xref</span></b></div><div class="c3"><b style="left:-7.58px"><span style="letter-spacing:-0.481px">.<i>\</i>Xrefs</span><span style="letter-spacing:-0.707px"><i>\</i></span><span style="letter-spacing:-0.549px">x-PLC </span><span style="letter-spacing:-0.077px">Plate.dwg</span></b></div><div class="c4"><b style="left:2.38px"><span style="letter-spacing:-0.321px">x-</span><span style="letter-spacing:-0.439px">PLC </span><span style="letter-spacing:-0.216px">Plate</span></b></div><div class="c5 g"><b style="left:2.60px"><span style="letter-spacing:-0.144px">No </span><span style="letter-spacing:0.086px">change</span></b></div><div class="c6 g"><b style="left:2.88px"><span style="letter-spacing:-0.024px">Attached</span></b></div></div>
<div class="r e" style="top:496px"><div class="n"><b>066</b></div><div class="c1 g"><b style="left:2.97px"><span style="letter-spacing:-0.103px">006 - </span><span style="letter-spacing:-0.270px">Analyzer Pi...</span></b></div><div class="c2 g"><b style="left:2.85px"><span style="letter-spacing:-0.213px">Datalink</span></b></div><div class="c3"><b style="left:-11.36px"><span style="letter-spacing:0.014px">..<i>\</i></span><span style="letter-spacing:-0.538px">KCPL </span><span style="letter-spacing:-0.074px">Project </span><span style="letter-spacing:-0.201px">Legend </span><span style="letter-spacing:-0.087px">Unit </span><span style="letter-spacing:-0.210px">9.xlsx!</span><span style="letter-spacing:-0.626px">Cal </span><span style="letter-spacing:0.095px">Bottles!</span><span style="letter-spacing:-0.614px">C5:C12</span></b></div><div class="c4"><b style="left:1.94px"><span style="letter-spacing:-0.334px">CB1</span></b></div><div class="c5 g"><b style="left:2.60px"><span style="letter-spacing:-0.144px">No </span><span style="letter-spacing:0.086px">change</span></b></div><div class="c6 g"><b style="left:2.51px"><span style="letter-spacing:0.314px">-</span></b></div></div>
<div class="r o" style="top:518px"><div class="n"><b>067</b></div><div class="c1 g"><b style="left:2.97px"><span style="letter-spacing:-0.103px">006 - </span><span style="letter-spacing:-0.270px">Analyzer Pi...</span></b></div><div class="c2 g"><b style="left:2.75px"><span style="letter-spacing:-0.423px">Xref</span></b></div><div class="c3"><b style="left:-7.58px"><span style="letter-spacing:-0.481px">.<i>\</i>Xrefs</span><span style="letter-spacing:-1.742px"><i>\</i></span><span style="letter-spacing:-0.301px">CEM_</span><span style="letter-spacing:-0.151px">Boundary.dwg</span></b></div><div class="c4"><b style="left:2.04px"><span style="letter-spacing:-0.201px">CEM_</span><span style="letter-spacing:-0.308px">Boundary</span></b></div><div class="c5 g"><b style="left:2.60px"><span style="letter-spacing:-0.144px">No </span><span style="letter-spacing:0.086px">change</span></b></div><div class="c6 g"><b style="left:2.88px"><span style="letter-spacing:-0.024px">Attached</span></b></div></div>
<div class="r e" style="top:540px"><div class="n"><b>068</b></div><div class="c1 g"><b style="left:2.97px"><span style="letter-spacing:-0.103px">006 - </span><span style="letter-spacing:-0.270px">Analyzer Pi...</span></b></div><div class="c2 g"><b style="left:2.75px"><span style="letter-spacing:-0.423px">Xref</span></b></div><div class="c3"><b style="left:-7.58px"><span style="letter-spacing:-0.481px">.<i>\</i>Xrefs</span><span style="letter-spacing:-0.707px"><i>\</i></span><span style="letter-spacing:-0.526px">x-Probe </span><span style="letter-spacing:-0.189px">Controller.dwg</span></b></div><div class="c4"><b style="left:2.38px"><span style="letter-spacing:-0.338px">x-Probe </span><span style="letter-spacing:-0.294px">Controller</span></b></div><div class="c5 g"><b style="left:2.60px"><span style="letter-spacing:-0.144px">No </span><span style="letter-spacing:0.086px">change</span></b></div><div class="c6 g"><b style="left:2.88px"><span style="letter-spacing:-0.024px">Attached</span></b></div></div>
<div class="r o" style="top:562px"><div class="n"><b>069</b></div><div class="c1 g"><b style="left:2.97px"><span style="letter-spacing:-0.192px">006 - </span><span style="letter-spacing:-0.166px">Gas Bottle ...</span></b></div><div class="c2 g"><b style="left:2.85px"><span style="letter-spacing:-0.213px">Datalink</span></b></div><div class="c3 p"><b style="left:-7.48px"><span style="letter-spacing:-0.469px">C:</span><span style="letter-spacing:-0.421px"><i>\</i></span><span style="letter-spacing:-0.266px">196. </span><span style="letter-spacing:-0.371px">FixRefs</span><span style="letter-spacing:-1.086px"><i>\</i></span><span style="letter-spacing:-0.333px">Kansas City </span><span style="letter-spacing:-0.296px">Power &amp; Light</span><span style="letter-spacing:-0.786px"><i>\</i></span><span style="letter-spacing:-0.337px">Kansas City </span><span style="letter-spacing:-0.296px">Power &amp; Light</span><span style="letter-spacing:-1.236px"><i>\</i></span><span style="letter-spacing:-0.224px">Hawthorn</span><span style="letter-spacing:-0.702px"><i>\</i></span><span style="letter-spacing:-0.161px">30 - </span><span style="letter-spacing:-0.194px">Integration </span><span style="letter-spacing:-0.306px">Projects</span><span style="letter-spacing:-1.537px"><i>\</i></span><span style="letter-spacing:0.114px">2 </span><span style="letter-spacing:-0.275px">Projects</span><span style="letter-spacing:-1.152px"><i>\</i></span><span style="letter-spacing:-0.237px">30-15313-5 </span><span style="letter-spacing:-0.024px">2018 U9 </span><span style="letter-spacing:0.043px">Stack  </span><span style="letter-spacing:-0.208px">8864 Install</span><span style="letter-spacing:-1.202px"><i>\</i></span><span style="letter-spacing:-0.273px">30-15313-5 </span><span style="letter-spacing:-0.233px">Drawings</span><span style="letter-spacing:-1.086px"><i>\</i></span><span style="letter-spacing:-0.438px">KCPL </span><span style="letter-spacing:-0.161px">Project </span><span style="letter-spacing:-0.087px">Legend </span><span style="letter-spacing:-0.077px">Unit </span><span style="letter-spacing:-0.202px">9.xlsx!...</span></b></div><div class="c4"><b style="left:1.94px"><span style="letter-spacing:-0.334px">CB1</span></b></div><div class="c5 g"></div><div class="c6 g"><b style="left:2.51px"><span style="letter-spacing:0.314px">-</span></b></div></div>
<div class="r e" style="top:584px"><div class="n"><b>070</b></div><div class="c1 g"><b style="left:2.97px"><span style="letter-spacing:-0.192px">006 - </span><span style="letter-spacing:-0.166px">Gas Bottle ...</span></b></div><div class="c2 g"><b style="left:2.75px"><span style="letter-spacing:-0.423px">Xref</span></b></div><div class="c3 p"><b style="left:-7.48px"><span style="letter-spacing:-0.469px">C:</span><span style="letter-spacing:-0.421px"><i>\</i></span><span style="letter-spacing:-0.266px">196. </span><span style="letter-spacing:-0.371px">FixRefs</span><span style="letter-spacing:-1.086px"><i>\</i></span><span style="letter-spacing:-0.333px">Kansas City </span><span style="letter-spacing:-0.296px">Power &amp; Light</span><span style="letter-spacing:-0.786px"><i>\</i></span><span style="letter-spacing:-0.337px">Kansas City </span><span style="letter-spacing:-0.296px">Power &amp; Light</span><span style="letter-spacing:-1.236px"><i>\</i></span><span style="letter-spacing:-0.224px">Hawthorn</span><span style="letter-spacing:-0.702px"><i>\</i></span><span style="letter-spacing:-0.161px">30 - </span><span style="letter-spacing:-0.194px">Integration </span><span style="letter-spacing:-0.306px">Projects</span><span style="letter-spacing:-1.537px"><i>\</i></span><span style="letter-spacing:0.114px">2 </span><span style="letter-spacing:-0.275px">Projects</span><span style="letter-spacing:-1.152px"><i>\</i></span><span style="letter-spacing:-0.237px">30-15313-5 </span><span style="letter-spacing:-0.024px">2018 U9 </span><span style="letter-spacing:0.043px">Stack  </span><span style="letter-spacing:-0.208px">8864 Install</span><span style="letter-spacing:-1.202px"><i>\</i></span><span style="letter-spacing:-0.273px">30-15313-5 </span><span style="letter-spacing:-0.233px">Drawings</span><span style="letter-spacing:-1.230px"><i>\</i></span><span style="letter-spacing:-0.369px">Xrefs</span><span style="letter-spacing:-1.442px"><i>\</i></span><span style="letter-spacing:-0.301px">CEM_</span><span style="letter-spacing:-0.226px">Boundary.dwg</span></b></div><div class="c4"><b style="left:2.04px"><span style="letter-spacing:-0.201px">CEM_</span><span style="letter-spacing:-0.308px">Boundary</span></b></div><div class="c5 g"></div><div class="c6 g"><b style="left:2.88px"><span style="letter-spacing:-0.024px">Attached</span></b></div></div>
<div class="r o" style="top:606px"><div class="n"><b>071</b></div><div class="c1 g"><b style="left:2.97px"><span style="letter-spacing:-0.250px">006 - </span><span style="letter-spacing:-0.246px">Pre-Cleanu...</span></b></div><div class="c2 g"><b style="left:2.75px"><span style="letter-spacing:-0.423px">Xref</span></b></div><div class="c3 p"><b style="left:-7.48px"><span style="letter-spacing:-0.469px">C:</span><span style="letter-spacing:-0.421px"><i>\</i></span><span style="letter-spacing:-0.266px">196. </span><span style="letter-spacing:-0.371px">FixRefs</span><span style="letter-spacing:-1.086px"><i>\</i></span><span style="letter-spacing:-0.333px">Kansas City </span><span style="letter-spacing:-0.296px">Power &amp; Light</span><span style="letter-spacing:-0.786px"><i>\</i></span><span style="letter-spacing:-0.337px">Kansas City </span><span style="letter-spacing:-0.296px">Power &amp; Light</span><span style="letter-spacing:-1.236px"><i>\</i></span><span style="letter-spacing:-0.224px">Hawthorn</span><span style="letter-spacing:-0.702px"><i>\</i></span><span style="letter-spacing:-0.161px">30 - </span><span style="letter-spacing:-0.194px">Integration </span><span style="letter-spacing:-0.306px">Projects</span><span style="letter-spacing:-1.537px"><i>\</i></span><span style="letter-spacing:0.114px">2 </span><span style="letter-spacing:-0.275px">Projects</span><span style="letter-spacing:-1.152px"><i>\</i></span><span style="letter-spacing:-0.237px">30-15313-5 </span><span style="letter-spacing:-0.024px">2018 U9 </span><span style="letter-spacing:0.043px">Stack  </span><span style="letter-spacing:-0.208px">8864 Install</span><span style="letter-spacing:-1.202px"><i>\</i></span><span style="letter-spacing:-0.273px">30-15313-5 </span><span style="letter-spacing:-0.233px">Drawings</span><span style="letter-spacing:-1.230px"><i>\</i></span><span style="letter-spacing:-0.369px">Xrefs</span><span style="letter-spacing:-1.442px"><i>\</i></span><span style="letter-spacing:-0.301px">CEM_</span><span style="letter-spacing:-0.226px">Boundary.dwg</span></b></div><div class="c4"><b style="left:2.04px"><span style="letter-spacing:-0.201px">CEM_</span><span style="letter-spacing:-0.308px">Boundary</span></b></div><div class="c5 g"></div><div class="c6 g"><b style="left:2.88px"><span style="letter-spacing:-0.024px">Attached</span></b></div></div>
<div class="r e" style="top:628px"><div class="n"><b>072</b></div><div class="c1 g"><b style="left:2.97px"><span style="letter-spacing:-0.250px">007 - </span><span style="letter-spacing:-0.184px">Probe Contr...</span></b></div><div class="c2 g"><b style="left:2.75px"><span style="letter-spacing:-0.423px">Xref</span></b></div><div class="c3 p"><b style="left:-7.48px"><span style="letter-spacing:-0.469px">C:</span><span style="letter-spacing:-0.421px"><i>\</i></span><span style="letter-spacing:-0.266px">196. </span><span style="letter-spacing:-0.371px">FixRefs</span><span style="letter-spacing:-1.086px"><i>\</i></span><span style="letter-spacing:-0.333px">Kansas City </span><span style="letter-spacing:-0.296px">Power &amp; Light</span><span style="letter-spacing:-0.786px"><i>\</i></span><span style="letter-spacing:-0.337px">Kansas City </span><span style="letter-spacing:-0.296px">Power &amp; Light</span><span style="letter-spacing:-1.236px"><i>\</i></span><span style="letter-spacing:-0.224px">Hawthorn</span><span style="letter-spacing:-0.702px"><i>\</i></span><span style="letter-spacing:-0.161px">30 - </span><span style="letter-spacing:-0.194px">Integration </span><span style="letter-spacing:-0.306px">Projects</span><span style="letter-spacing:-1.537px"><i>\</i></span><span style="letter-spacing:0.114px">2 </span><span style="letter-spacing:-0.275px">Projects</span><span style="letter-spacing:-1.152px"><i>\</i></span><span style="letter-spacing:-0.237px">30-15313-5 </span><span style="letter-spacing:-0.024px">2018 U9 </span><span style="letter-spacing:0.043px">Stack  </span><span style="letter-spacing:-0.208px">8864 Install</span><span style="letter-spacing:-1.202px"><i>\</i></span><span style="letter-spacing:-0.273px">30-15313-5 </span><span style="letter-spacing:-0.233px">Drawings</span><span style="letter-spacing:-1.230px"><i>\</i></span><span style="letter-spacing:-0.369px">Xrefs</span><span style="letter-spacing:-1.442px"><i>\</i></span><span style="letter-spacing:-0.301px">CEM_</span><span style="letter-spacing:-0.226px">Boundary.dwg</span></b></div><div class="c4"><b style="left:2.04px"><span style="letter-spacing:-0.201px">CEM_</span><span style="letter-spacing:-0.308px">Boundary</span></b></div><div class="c5 g"></div><div class="c6 g"><b style="left:2.88px"><span style="letter-spacing:-0.024px">Attached</span></b></div></div>
<div class="r o" style="top:650px"><div class="n"><b>073</b></div><div class="c1 g"><b style="left:2.97px"><span style="letter-spacing:-0.250px">007 - </span><span style="letter-spacing:-0.184px">Probe Contr...</span></b></div><div class="c2 g"><b style="left:2.75px"><span style="letter-spacing:-0.423px">Xref</span></b></div><div class="c3"><b style="left:-7.58px"><span style="letter-spacing:-0.481px">.<i>\</i>Xrefs</span><span style="letter-spacing:-1.742px"><i>\</i></span><span style="letter-spacing:-0.301px">CEM_</span><span style="letter-spacing:-0.151px">Boundary.dwg</span></b></div><div class="c4"><b style="left:2.04px"><span style="letter-spacing:-0.201px">CEM_</span><span style="letter-spacing:-0.308px">Boundary</span></b></div><div class="c5 g"><b style="left:2.60px"><span style="letter-spacing:-0.144px">No </span><span style="letter-spacing:0.086px">change</span></b></div><div class="c6 g"><b style="left:2.88px"><span style="letter-spacing:-0.024px">Attached</span></b></div></div>
<div class="r e" style="top:672px"><div class="n"><b>074</b></div><div class="c1 g"><b style="left:2.97px"><span style="letter-spacing:-0.250px">007 - </span><span style="letter-spacing:-0.184px">Probe Contr...</span></b></div><div class="c2 g"><b style="left:2.75px"><span style="letter-spacing:-0.423px">Xref</span></b></div><div class="c3"><b style="left:-7.58px"><span style="letter-spacing:-0.481px">.<i>\</i>Xrefs</span><span style="letter-spacing:-1.742px"><i>\</i></span><span style="letter-spacing:-0.301px">CEM_</span><span style="letter-spacing:-0.151px">Boundary.dwg</span></b></div><div class="c4"><b style="left:2.04px"><span style="letter-spacing:-0.201px">CEM_</span><span style="letter-spacing:-0.308px">Boundary</span></b></div><div class="c5 g"><b style="left:2.60px"><span style="letter-spacing:-0.144px">No </span><span style="letter-spacing:0.086px">change</span></b></div><div class="c6 g"><b style="left:2.88px"><span style="letter-spacing:-0.024px">Attached</span></b></div></div>
<div class="r o" style="top:694px"><div class="n"><b>075</b></div><div class="c1 g"><b style="left:2.97px"><span style="letter-spacing:-0.250px">007 - </span><span style="letter-spacing:-0.184px">Probe Contr...</span></b></div><div class="c2 g"><b style="left:2.75px"><span style="letter-spacing:-0.423px">Xref</span></b></div><div class="c3"><b style="left:-7.58px"><span style="letter-spacing:-0.481px">.<i>\</i>Xrefs</span><span style="letter-spacing:-1.742px"><i>\</i></span><span style="letter-spacing:-0.301px">CEM_</span><span style="letter-spacing:-0.151px">Boundary.dwg</span></b></div><div class="c4"><b style="left:2.04px"><span style="letter-spacing:-0.201px">CEM_</span><span style="letter-spacing:-0.308px">Boundary</span></b></div><div class="c5 g"><b style="left:2.60px"><span style="letter-spacing:-0.144px">No </span><span style="letter-spacing:0.086px">change</span></b></div><div class="c6 g"><b style="left:2.88px"><span style="letter-spacing:-0.024px">Attached</span></b></div></div>
<div class="r e" style="top:716px"><div class="n"><b>076</b></div><div class="c1 g"><b style="left:2.97px"><span style="letter-spacing:-0.250px">007 - </span><span style="letter-spacing:-0.184px">Probe Contr...</span></b></div><div class="c2 g"><b style="left:2.75px"><span style="letter-spacing:-0.423px">Xref</span></b></div><div class="c3"><b style="left:-7.58px"><span style="letter-spacing:-0.481px">.<i>\</i>Xrefs</span><span style="letter-spacing:-1.742px"><i>\</i></span><span style="letter-spacing:-0.301px">CEM_</span><span style="letter-spacing:-0.151px">Boundary.dwg</span></b></div><div class="c4"><b style="left:2.04px"><span style="letter-spacing:-0.201px">CEM_</span><span style="letter-spacing:-0.308px">Boundary</span></b></div><div class="c5 g"><b style="left:2.60px"><span style="letter-spacing:-0.144px">No </span><span style="letter-spacing:0.086px">change</span></b></div><div class="c6 g"><b style="left:2.88px"><span style="letter-spacing:-0.024px">Attached</span></b></div></div>
<div class="r o" style="top:738px"><div class="n"><b>077</b></div><div class="c1 g"><b style="left:2.97px"><span style="letter-spacing:-0.250px">007 - </span><span style="letter-spacing:-0.184px">Probe Contr...</span></b></div><div class="c2 g"><b style="left:2.75px"><span style="letter-spacing:-0.423px">Xref</span></b></div><div class="c3"><b style="left:-7.58px"><span style="letter-spacing:-0.481px">.<i>\</i>Xrefs</span><span style="letter-spacing:-1.742px"><i>\</i></span><span style="letter-spacing:-0.301px">CEM_</span><span style="letter-spacing:-0.151px">Boundary.dwg</span></b></div><div class="c4"><b style="left:2.04px"><span style="letter-spacing:-0.201px">CEM_</span><span style="letter-spacing:-0.308px">Boundary</span></b></div><div class="c5 g"><b style="left:2.60px"><span style="letter-spacing:-0.144px">No </span><span style="letter-spacing:0.086px">change</span></b></div><div class="c6 g"><b style="left:2.88px"><span style="letter-spacing:-0.024px">Attached</span></b></div></div>
<div class="r e" style="top:760px"><div class="n"><b>078</b></div><div class="c1 g"><b style="left:2.97px"><span style="letter-spacing:-0.250px">007 - </span><span style="letter-spacing:-0.184px">Probe Contr...</span></b></div><div class="c2 g"><b style="left:2.75px"><span style="letter-spacing:-0.423px">Xref</span></b></div><div class="c3"><b style="left:-7.58px"><span style="letter-spacing:-0.481px">.<i>\</i>Xrefs</span><span style="letter-spacing:-1.742px"><i>\</i></span><span style="letter-spacing:-0.301px">CEM_</span><span style="letter-spacing:-0.151px">Boundary.dwg</span></b></div><div class="c4"><b style="left:2.04px"><span style="letter-spacing:-0.201px">CEM_</span><span style="letter-spacing:-0.308px">Boundary</span></b></div><div class="c5 g"><b style="left:2.60px"><span style="letter-spacing:-0.144px">No </span><span style="letter-spacing:0.086px">change</span></b></div><div class="c6 g"><b style="left:2.88px"><span style="letter-spacing:-0.024px">Attached</span></b></div></div>
<div class="r o" style="top:782px"><div class="n"><b>079</b></div><div class="c1 g"><b style="left:2.97px"><span style="letter-spacing:-0.250px">007 - </span><span style="letter-spacing:-0.184px">Probe Contr...</span></b></div><div class="c2 g"><b style="left:2.75px"><span style="letter-spacing:-0.423px">Xref</span></b></div><div class="c3 p"><b style="left:-7.48px"><span style="letter-spacing:-0.469px">C:</span><span style="letter-spacing:-0.421px"><i>\</i></span><span style="letter-spacing:-0.266px">196. </span><span style="letter-spacing:-0.371px">FixRefs</span><span style="letter-spacing:-1.086px"><i>\</i></span><span style="letter-spacing:-0.333px">Kansas City </span><span style="letter-spacing:-0.296px">Power &amp; Light</span><span style="letter-spacing:-0.786px"><i>\</i></span><span style="letter-spacing:-0.337px">Kansas City </span><span style="letter-spacing:-0.296px">Power &amp; Light</span><span style="letter-spacing:-1.236px"><i>\</i></span><span style="letter-spacing:-0.224px">Hawthorn</span><span style="letter-spacing:-0.702px"><i>\</i></span><span style="letter-spacing:-0.161px">30 - </span><span style="letter-spacing:-0.194px">Integration </span><span style="letter-spacing:-0.306px">Projects</span><span style="letter-spacing:-1.537px"><i>\</i></span><span style="letter-spacing:0.114px">2 </span><span style="letter-spacing:-0.275px">Projects</span><span style="letter-spacing:-1.152px"><i>\</i></span><span style="letter-spacing:-0.237px">30-15313-5 </span><span style="letter-spacing:-0.024px">2018 U9 </span><span style="letter-spacing:0.043px">Stack  </span><span style="letter-spacing:-0.208px">8864 Install</span><span style="letter-spacing:-1.202px"><i>\</i></span><span style="letter-spacing:-0.273px">30-15313-5 </span><span style="letter-spacing:-0.233px">Drawings</span><span style="letter-spacing:-1.230px"><i>\</i></span><span style="letter-spacing:-0.369px">Xrefs</span><span style="letter-spacing:-1.442px"><i>\</i></span><span style="letter-spacing:-0.301px">CEM_</span><span style="letter-spacing:-0.226px">Boundary.dwg</span></b></div><div class="c4"><b style="left:2.04px"><span style="letter-spacing:-0.201px">CEM_</span><span style="letter-spacing:-0.308px">Boundary</span></b></div><div class="c5 g"></div><div class="c6 g"><b style="left:2.88px"><span style="letter-spacing:-0.024px">Attached</span></b></div></div>
<div class="r e" style="top:804px"><div class="n"><b>080</b></div><div class="c1 g"><b style="left:2.97px"><span style="letter-spacing:-0.250px">007 - </span><span style="letter-spacing:-0.184px">Probe Contr...</span></b></div><div class="c2 g"><b style="left:2.75px"><span style="letter-spacing:-0.423px">Xref</span></b></div><div class="c3 p"><b style="left:-7.48px"><span style="letter-spacing:-0.469px">C:</span><span style="letter-spacing:-0.421px"><i>\</i></span><span style="letter-spacing:-0.266px">196. </span><span style="letter-spacing:-0.371px">FixRefs</span><span style="letter-spacing:-1.086px"><i>\</i></span><span style="letter-spacing:-0.333px">Kansas City </span><span style="letter-spacing:-0.296px">Power &amp; Light</span><span style="letter-spacing:-0.786px"><i>\</i></span><span style="letter-spacing:-0.337px">Kansas City </span><span style="letter-spacing:-0.296px">Power &amp; Light</span><span style="letter-spacing:-1.236px"><i>\</i></span><span style="letter-spacing:-0.224px">Hawthorn</span><span style="letter-spacing:-0.702px"><i>\</i></span><span style="letter-spacing:-0.161px">30 - </span><span style="letter-spacing:-0.194px">Integration </span><span style="letter-spacing:-0.306px">Projects</span><span style="letter-spacing:-1.537px"><i>\</i></span><span style="letter-spacing:0.114px">2 </span><span style="letter-spacing:-0.275px">Projects</span><span style="letter-spacing:-1.152px"><i>\</i></span><span style="letter-spacing:-0.237px">30-15313-5 </span><span style="letter-spacing:-0.024px">2018 U9 </span><span style="letter-spacing:0.043px">Stack  </span><span style="letter-spacing:-0.208px">8864 Install</span><span style="letter-spacing:-1.202px"><i>\</i></span><span style="letter-spacing:-0.273px">30-15313-5 </span><span style="letter-spacing:-0.233px">Drawings</span><span style="letter-spacing:-1.230px"><i>\</i></span><span style="letter-spacing:-0.369px">Xrefs</span><span style="letter-spacing:-1.442px"><i>\</i></span><span style="letter-spacing:-0.301px">CEM_</span><span style="letter-spacing:-0.226px">Boundary.dwg</span></b></div><div class="c4"><b style="left:2.04px"><span style="letter-spacing:-0.201px">CEM_</span><span style="letter-spacing:-0.308px">Boundary</span></b></div><div class="c5 g"></div><div class="c6 g"><b style="left:2.88px"><span style="letter-spacing:-0.024px">Attached</span></b></div></div>
<div class="r o" style="top:826px"><div class="n"><b>081</b></div><div class="c1 g"><b style="left:2.97px"><span style="letter-spacing:-0.250px">007 - </span><span style="letter-spacing:-0.184px">Probe Contr...</span></b></div><div class="c2 g"><b style="left:2.75px"><span style="letter-spacing:-0.423px">Xref</span></b></div><div class="c3 p"><b style="left:-7.48px"><span style="letter-spacing:-0.469px">C:</span><span style="letter-spacing:-0.421px"><i>\</i></span><span style="letter-spacing:-0.266px">196. </span><span style="letter-spacing:-0.371px">FixRefs</span><span style="letter-spacing:-1.086px"><i>\</i></span><span style="letter-spacing:-0.333px">Kansas City </span><span style="letter-spacing:-0.296px">Power &amp; Light</span><span style="letter-spacing:-0.786px"><i>\</i></span><span style="letter-spacing:-0.337px">Kansas City </span><span style="letter-spacing:-0.296px">Power &amp; Light</span><span style="letter-spacing:-1.236px"><i>\</i></span><span style="letter-spacing:-0.224px">Hawthorn</span><span style="letter-spacing:-0.702px"><i>\</i></span><span style="letter-spacing:-0.161px">30 - </span><span style="letter-spacing:-0.194px">Integration </span><span style="letter-spacing:-0.306px">Projects</span><span style="letter-spacing:-1.537px"><i>\</i></span><span style="letter-spacing:0.114px">2 </span><span style="letter-spacing:-0.275px">Projects</span><span style="letter-spacing:-1.152px"><i>\</i></span><span style="letter-spacing:-0.237px">30-15313-5 </span><span style="letter-spacing:-0.024px">2018 U9 </span><span style="letter-spacing:0.043px">Stack  </span><span style="letter-spacing:-0.208px">8864 Install</span><span style="letter-spacing:-1.202px"><i>\</i></span><span style="letter-spacing:-0.273px">30-15313-5 </span><span style="letter-spacing:-0.233px">Drawings</span><span style="letter-spacing:-1.230px"><i>\</i></span><span style="letter-spacing:-0.409px">Xrefs</span><span style="letter-spacing:-1.107px"><i>\</i></span><span style="letter-spacing:-0.596px">x-</span><span style="letter-spacing:-0.344px">Probe </span><span style="letter-spacing:-0.243px">Controller.dwg</span></b></div><div class="c4"><b style="left:2.38px"><span style="letter-spacing:-0.338px">x-Probe </span><span style="letter-spacing:-0.294px">Controller</span></b></div><div class="c5 g"></div><div class="c6 g"><b style="left:2.88px"><span style="letter-spacing:-0.024px">Attached</span></b></div></div>
<div class="r e" style="top:848px"><div class="n"><b>082</b></div><div class="c1 g"><b style="left:2.97px"><span style="letter-spacing:-0.250px">007 - </span><span style="letter-spacing:-0.184px">Probe Contr...</span></b></div><div class="c2 g"><b style="left:2.75px"><span style="letter-spacing:-0.423px">Xref</span></b></div><div class="c3 p"><b style="left:-7.48px"><span style="letter-spacing:-0.469px">C:</span><span style="letter-spacing:-0.421px"><i>\</i></span><span style="letter-spacing:-0.266px">196. </span><span style="letter-spacing:-0.371px">FixRefs</span><span style="letter-spacing:-1.086px"><i>\</i></span><span style="letter-spacing:-0.333px">Kansas City </span><span style="letter-spacing:-0.296px">Power &amp; Light</span><span style="letter-spacing:-0.786px"><i>\</i></span><span style="letter-spacing:-0.337px">Kansas City </span><span style="letter-spacing:-0.296px">Power &amp; Light</span><span style="letter-spacing:-1.236px"><i>\</i></span><span style="letter-spacing:-0.224px">Hawthorn</span><span style="letter-spacing:-0.702px"><i>\</i></span><span style="letter-spacing:-0.161px">30 - </span><span style="letter-spacing:-0.194px">Integration </span><span style="letter-spacing:-0.306px">Projects</span><span style="letter-spacing:-1.537px"><i>\</i></span><span style="letter-spacing:0.114px">2 </span><span style="letter-spacing:-0.275px">Projects</span><span style="letter-spacing:-1.152px"><i>\</i></span><span style="letter-spacing:-0.237px">30-15313-5 </span><span style="letter-spacing:-0.024px">2018 U9 </span><span style="letter-spacing:0.043px">Stack  </span><span style="letter-spacing:-0.208px">8864 Install</span><span style="letter-spacing:-1.202px"><i>\</i></span><span style="letter-spacing:-0.273px">30-15313-5 </span><span style="letter-spacing:-0.233px">Drawings</span><span style="letter-spacing:-1.230px"><i>\</i></span><span style="letter-spacing:-0.369px">Xrefs</span><span style="letter-spacing:-1.442px"><i>\</i></span><span style="letter-spacing:-0.301px">CEM_</span><span style="letter-spacing:-0.226px">Boundary.dwg</span></b></div><div class="c4"><b style="left:2.04px"><span style="letter-spacing:-0.201px">CEM_</span><span style="letter-spacing:-0.308px">Boundary</span></b></div><div class="c5 g"></div><div class="c6 g"><b style="left:2.88px"><span style="letter-spacing:-0.024px">Attached</span></b></div></div>
<div class="r o" style="top:870px"><div class="n"><b>083</b></div><div class="c1 g"><b style="left:2.97px"><span style="letter-spacing:-0.250px">007 - </span><span style="letter-spacing:-0.184px">Probe Contr...</span></b></div><div class="c2 g"><b style="left:2.75px"><span style="letter-spacing:-0.423px">Xref</span></b></div><div class="c3 p"><b style="left:-7.48px"><span style="letter-spacing:-0.469px">C:</span><span style="letter-spacing:-0.421px"><i>\</i></span><span style="letter-spacing:-0.266px">196. </span><span style="letter-spacing:-0.371px">FixRefs</span><span style="letter-spacing:-1.086px"><i>\</i></span><span style="letter-spacing:-0.333px">Kansas City </span><span style="letter-spacing:-0.296px">Power &amp; Light</span><span style="letter-spacing:-0.786px"><i>\</i></span><span style="letter-spacing:-0.337px">Kansas City </span><span style="letter-spacing:-0.296px">Power &amp; Light</span><span style="letter-spacing:-1.236px"><i>\</i></span><span style="letter-spacing:-0.224px">Hawthorn</span><span style="letter-spacing:-0.702px"><i>\</i></span><span style="letter-spacing:-0.161px">30 - </span><span style="letter-spacing:-0.194px">Integration </span><span style="letter-spacing:-0.306px">Projects</span><span style="letter-spacing:-1.537px"><i>\</i></span><span style="letter-spacing:0.114px">2 </span><span style="letter-spacing:-0.275px">Projects</span><span style="letter-spacing:-1.152px"><i>\</i></span><span style="letter-spacing:-0.237px">30-15313-5 </span><span style="letter-spacing:-0.024px">2018 U9 </span><span style="letter-spacing:0.043px">Stack  </span><span style="letter-spacing:-0.208px">8864 Install</span><span style="letter-spacing:-1.202px"><i>\</i></span><span style="letter-spacing:-0.273px">30-15313-5 </span><span style="letter-spacing:-0.233px">Drawings</span><span style="letter-spacing:-1.230px"><i>\</i></span><span style="letter-spacing:-0.369px">Xrefs</span><span style="letter-spacing:-1.442px"><i>\</i></span><span style="letter-spacing:-0.301px">CEM_</span><span style="letter-spacing:-0.226px">Boundary.dwg</span></b></div><div class="c4"><b style="left:2.04px"><span style="letter-spacing:-0.201px">CEM_</span><span style="letter-spacing:-0.308px">Boundary</span></b></div><div class="c5 g"></div><div class="c6 g"><b style="left:2.88px"><span style="letter-spacing:-0.024px">Attached</span></b></div></div>
<div class="r e" style="top:892px"><div class="n"><b>084</b></div><div class="c1 g"><b style="left:2.97px"><span style="letter-spacing:-0.250px">007 - </span><span style="letter-spacing:-0.184px">Probe Contr...</span></b></div><div class="c2 g"><b style="left:2.75px"><span style="letter-spacing:-0.423px">Xref</span></b></div><div class="c3 p"><b style="left:-7.48px"><span style="letter-spacing:-0.469px">C:</span><span style="letter-spacing:-0.421px"><i>\</i></span><span style="letter-spacing:-0.266px">196. </span><span style="letter-spacing:-0.371px">FixRefs</span><span style="letter-spacing:-1.086px"><i>\</i></span><span style="letter-spacing:-0.333px">Kansas City </span><span style="letter-spacing:-0.296px">Power &amp; Light</span><span style="letter-spacing:-0.786px"><i>\</i></span><span style="letter-spacing:-0.337px">Kansas City </span><span style="letter-spacing:-0.296px">Power &amp; Light</span><span style="letter-spacing:-1.236px"><i>\</i></span><span style="letter-spacing:-0.224px">Hawthorn</span><span style="letter-spacing:-0.702px"><i>\</i></span><span style="letter-spacing:-0.161px">30 - </span><span style="letter-spacing:-0.194px">Integration </span><span style="letter-spacing:-0.306px">Projects</span><span style="letter-spacing:-1.537px"><i>\</i></span><span style="letter-spacing:0.114px">2 </span><span style="letter-spacing:-0.275px">Projects</span><span style="letter-spacing:-1.152px"><i>\</i></span><span style="letter-spacing:-0.237px">30-15313-5 </span><span style="letter-spacing:-0.024px">2018 U9 </span><span style="letter-spacing:0.043px">Stack  </span><span style="letter-spacing:-0.208px">8864 Install</span><span style="letter-spacing:-1.202px"><i>\</i></span><span style="letter-spacing:-0.273px">30-15313-5 </span><span style="letter-spacing:-0.233px">Drawings</span><span style="letter-spacing:-1.230px"><i>\</i></span><span style="letter-spacing:-0.369px">Xrefs</span><span style="letter-spacing:-1.442px"><i>\</i></span><span style="letter-spacing:-0.301px">CEM_</span><span style="letter-spacing:-0.226px">Boundary.dwg</span></b></div><div class="c4"><b style="left:2.04px"><span style="letter-spacing:-0.201px">CEM_</span><span style="letter-spacing:-0.308px">Boundary</span></b></div><div class="c5 g"></div><div class="c6 g"><b style="left:2.88px"><span style="letter-spacing:-0.024px">Attached</span></b></div></div>
<div class="r o" style="top:914px"><div class="n"><b>085</b></div><div class="c1 g"><b style="left:2.97px"><span style="letter-spacing:-0.241px">008 - </span><span style="letter-spacing:-0.223px">Umbilical Cr...</span></b></div><div class="c2 g"><b style="left:2.75px"><span style="letter-spacing:-0.423px">Xref</span></b></div><div class="c3 p"><b style="left:-7.48px"><span style="letter-spacing:-0.469px">C:</span><span style="letter-spacing:-0.421px"><i>\</i></span><span style="letter-spacing:-0.266px">196. </span><span style="letter-spacing:-0.371px">FixRefs</span><span style="letter-spacing:-1.086px"><i>\</i></span><span style="letter-spacing:-0.333px">Kansas City </span><span style="letter-spacing:-0.296px">Power &amp; Light</span><span style="letter-spacing:-0.786px"><i>\</i></span><span style="letter-spacing:-0.337px">Kansas City </span><span style="letter-spacing:-0.296px">Power &amp; Light</span><span style="letter-spacing:-1.236px"><i>\</i></span><span style="letter-spacing:-0.224px">Hawthorn</span><span style="letter-spacing:-0.702px"><i>\</i></span><span style="letter-spacing:-0.161px">30 - </span><span style="letter-spacing:-0.194px">Integration </span><span style="letter-spacing:-0.306px">Projects</span><span style="letter-spacing:-1.537px"><i>\</i></span><span style="letter-spacing:0.114px">2 </span><span style="letter-spacing:-0.275px">Projects</span><span style="letter-spacing:-1.152px"><i>\</i></span><span style="letter-spacing:-0.237px">30-15313-5 </span><span style="letter-spacing:-0.024px">2018 U9 </span><span style="letter-spacing:0.043px">Stack  </span><span style="letter-spacing:-0.208px">8864 Install</span><span style="letter-spacing:-1.202px"><i>\</i></span><span style="letter-spacing:-0.273px">30-15313-5 </span><span style="letter-spacing:-0.233px">Drawings</span><span style="letter-spacing:-1.230px"><i>\</i></span><span style="letter-spacing:-0.369px">Xrefs</span><span style="letter-spacing:-1.442px"><i>\</i></span><span style="letter-spacing:-0.301px">CEM_</span><span style="letter-spacing:-0.226px">Boundary.dwg</span></b></div><div class="c4"><b style="left:2.04px"><span style="letter-spacing:-0.201px">CEM_</span><span style="letter-spacing:-0.308px">Boundary</span></b></div><div class="c5 g"></div><div class="c6 g"><b style="left:2.88px"><span style="letter-spacing:-0.024px">Attached</span></b></div></div>
<div class="r e" style="top:936px"><div class="n"><b>086</b></div><div class="c1 g"><b style="left:2.97px"><span style="letter-spacing:-0.241px">008 - </span><span style="letter-spacing:-0.144px">Umbilical In...</span></b></div><div class="c2 g"><b style="left:2.75px"><span style="letter-spacing:-0.423px">Xref</span></b></div><div class="c3 p"><b style="left:-7.48px"><span style="letter-spacing:-0.469px">C:</span><span style="letter-spacing:-0.421px"><i>\</i></span><span style="letter-spacing:-0.266px">196. </span><span style="letter-spacing:-0.371px">FixRefs</span><span style="letter-spacing:-1.086px"><i>\</i></span><span style="letter-spacing:-0.333px">Kansas City </span><span style="letter-spacing:-0.296px">Power &amp; Light</span><span style="letter-spacing:-0.786px"><i>\</i></span><span style="letter-spacing:-0.337px">Kansas City </span><span style="letter-spacing:-0.296px">Power &amp; Light</span><span style="letter-spacing:-1.236px"><i>\</i></span><span style="letter-spacing:-0.224px">Hawthorn</span><span style="letter-spacing:-0.702px"><i>\</i></span><span style="letter-spacing:-0.161px">30 - </span><span style="letter-spacing:-0.194px">Integration </span><span style="letter-spacing:-0.306px">Projects</span><span style="letter-spacing:-1.537px"><i>\</i></span><span style="letter-spacing:0.114px">2 </span><span style="letter-spacing:-0.275px">Projects</span><span style="letter-spacing:-1.152px"><i>\</i></span><span style="letter-spacing:-0.237px">30-15313-5 </span><span style="letter-spacing:-0.024px">2018 U9 </span><span style="letter-spacing:0.043px">Stack  </span><span style="letter-spacing:-0.208px">8864 Install</span><span style="letter-spacing:-1.202px"><i>\</i></span><span style="letter-spacing:-0.273px">30-15313-5 </span><span style="letter-spacing:-0.233px">Drawings</span><span style="letter-spacing:-1.230px"><i>\</i></span><span style="letter-spacing:-0.369px">Xrefs</span><span style="letter-spacing:-1.442px"><i>\</i></span><span style="letter-spacing:-0.301px">CEM_</span><span style="letter-spacing:-0.226px">Boundary.dwg</span></b></div><div class="c4"><b style="left:2.04px"><span style="letter-spacing:-0.201px">CEM_</span><span style="letter-spacing:-0.308px">Boundary</span></b></div><div class="c5 g"></div><div class="c6 g"><b style="left:2.88px"><span style="letter-spacing:-0.024px">Attached</span></b></div></div>
<div class="r o" style="top:958px"><div class="n"><b>087</b></div><div class="c1 g"><b style="left:2.97px"><span style="letter-spacing:-0.250px">008 - </span><span style="letter-spacing:-0.125px">Flange Con...</span></b></div><div class="c2 g"><b style="left:2.75px"><span style="letter-spacing:-0.423px">Xref</span></b></div><div class="c3 p"><b style="left:-7.48px"><span style="letter-spacing:-0.469px">C:</span><span style="letter-spacing:-0.421px"><i>\</i></span><span style="letter-spacing:-0.266px">196. </span><span style="letter-spacing:-0.371px">FixRefs</span><span style="letter-spacing:-1.086px"><i>\</i></span><span style="letter-spacing:-0.333px">Kansas City </span><span style="letter-spacing:-0.296px">Power &amp; Light</span><span style="letter-spacing:-0.786px"><i>\</i></span><span style="letter-spacing:-0.337px">Kansas City </span><span style="letter-spacing:-0.296px">Power &amp; Light</span><span style="letter-spacing:-1.236px"><i>\</i></span><span style="letter-spacing:-0.224px">Hawthorn</span><span style="letter-spacing:-0.702px"><i>\</i></span><span style="letter-spacing:-0.161px">30 - </span><span style="letter-spacing:-0.194px">Integration </span><span style="letter-spacing:-0.306px">Projects</span><span style="letter-spacing:-1.537px"><i>\</i></span><span style="letter-spacing:0.114px">2 </span><span style="letter-spacing:-0.275px">Projects</span><span style="letter-spacing:-1.152px"><i>\</i></span><span style="letter-spacing:-0.237px">30-15313-5 </span><span style="letter-spacing:-0.024px">2018 U9 </span><span style="letter-spacing:0.043px">Stack  </span><span style="letter-spacing:-0.208px">8864 Install</span><span style="letter-spacing:-1.202px"><i>\</i></span><span style="letter-spacing:-0.273px">30-15313-5 </span><span style="letter-spacing:-0.233px">Drawings</span><span style="letter-spacing:-1.230px"><i>\</i></span><span style="letter-spacing:-0.369px">Xrefs</span><span style="letter-spacing:-1.442px"><i>\</i></span><span style="letter-spacing:-0.301px">CEM_</span><span style="letter-spacing:-0.226px">Boundary.dwg</span></b></div><div class="c4"><b style="left:2.04px"><span style="letter-spacing:-0.201px">CEM_</span><span style="letter-spacing:-0.308px">Boundary</span></b></div><div class="c5 g"></div><div class="c6 g"><b style="left:2.88px"><span style="letter-spacing:-0.024px">Attached</span></b></div></div>
<div class="hl" style="left:21px;top:100px;width:1863px"></div><div class="hl" style="left:62px;top:122px;width:1822px"></div><div class="hl" style="left:62px;top:144px;width:1822px"></div><div class="hl" style="left:62px;top:166px;width:1822px"></div><div class="hl" style="left:62px;top:188px;width:1822px"></div><div class="hl" style="left:62px;top:210px;width:1822px"></div><div class="hl" style="left:62px;top:232px;width:1822px"></div><div class="hl" style="left:62px;top:254px;width:1822px"></div><div class="hl" style="left:62px;top:276px;width:1822px"></div><div class="hl" style="left:62px;top:298px;width:1822px"></div><div class="hl" style="left:62px;top:320px;width:1822px"></div><div class="hl" style="left:62px;top:342px;width:1822px"></div><div class="hl" style="left:62px;top:364px;width:1822px"></div><div class="hl" style="left:62px;top:386px;width:1822px"></div><div class="hl" style="left:62px;top:408px;width:1822px"></div><div class="hl" style="left:62px;top:430px;width:1822px"></div><div class="hl" style="left:62px;top:452px;width:1822px"></div><div class="hl" style="left:62px;top:474px;width:1822px"></div><div class="hl" style="left:62px;top:496px;width:1822px"></div><div class="hl" style="left:62px;top:518px;width:1822px"></div><div class="hl" style="left:62px;top:540px;width:1822px"></div><div class="hl" style="left:62px;top:562px;width:1822px"></div><div class="hl" style="left:62px;top:584px;width:1822px"></div><div class="hl" style="left:62px;top:606px;width:1822px"></div><div class="hl" style="left:62px;top:628px;width:1822px"></div><div class="hl" style="left:62px;top:650px;width:1822px"></div><div class="hl" style="left:62px;top:672px;width:1822px"></div><div class="hl" style="left:62px;top:694px;width:1822px"></div><div class="hl" style="left:62px;top:716px;width:1822px"></div><div class="hl" style="left:62px;top:738px;width:1822px"></div><div class="hl" style="left:62px;top:760px;width:1822px"></div><div class="hl" style="left:62px;top:782px;width:1822px"></div><div class="hl" style="left:62px;top:804px;width:1822px"></div><div class="hl" style="left:62px;top:826px;width:1822px"></div><div class="hl" style="left:62px;top:848px;width:1822px"></div><div class="hl" style="left:62px;top:870px;width:1822px"></div><div class="hl" style="left:62px;top:892px;width:1822px"></div><div class="hl" style="left:62px;top:914px;width:1822px"></div><div class="hl" style="left:62px;top:936px;width:1822px"></div><div class="hl" style="left:62px;top:958px;width:1822px"></div>
<div class="vl" style="left:62px;top:65px;height:902px"></div><div class="vl" style="left:162px;top:100px;height:867px"></div><div class="vl" style="left:262px;top:100px;height:867px"></div><div class="vl" style="left:1283px;top:100px;height:867px"></div><div class="vl" style="left:1483px;top:100px;height:867px"></div><div class="vl" style="left:1683px;top:100px;height:867px"></div><div class="vl" style="left:1883px;top:100px;height:867px"></div>
</div>
<div class="a" style="left:1884px;top:65px;width:17px;height:919px;background:#f0f0f0"></div><div class="a" style="left:1885px;top:256px;width:15px;height:140px;background:#cdcdcd"></div><div class="a" style="left:21px;top:967px;width:1880px;height:17px;background:#f0f0f0"></div><div class="a" style="left:371px;top:968px;width:1496px;height:15px;background:#cdcdcd"></div><div class="a" style="left:1884px;top:100px;width:1px;height:867px;background:#fff"></div><div class="a" style="left:21px;top:967px;width:1863px;height:1px;background:#fff"></div><svg class="a" style="left:0;top:0" width="1920" height="1044" viewBox="0 0 1920 1044" fill="#5e5e5e"><path d="M1892.55 70.9L1896.3 74.65L1896.3 77.15L1892.55 73.4L1888.8 77.15L1888.8 74.65ZM1888.8 955.8L1892.55 959.55L1896.3 955.8L1896.3 958.3L1892.55 962.05L1888.8 958.3ZM1872.8 971.8000000000001L1875.5 971.8000000000001L1879.15 975.45L1875.5 979.1L1872.8 979.1L1876.45 975.45ZM32.3 972.0L29.4 972.0L25.7 975.7L29.4 979.4000000000001L32.3 979.4000000000001L28.599999999999998 975.7Z"/></svg>
<div class="btn" style="left:14px;width:145px"><b style="left:12.48px;top:0px"><span style="letter-spacing:0.086px">Open Selected Drawing</span></b></div><div class="btn" style="left:167px;width:145px"><b style="left:16.48px;top:0px"><span style="letter-spacing:0.080px">Open Selected Folder</span></b></div><div class="btn" style="left:1259px;width:121px"><b style="left:8.44px;top:0px"><span style="letter-spacing:0.109px">Convert To Absolute</span></b></div><div class="btn" style="left:1388px;width:121px"><b style="left:9.19px;top:0px"><span style="letter-spacing:0.163px">Convert To Relative</span></b></div><div class="btn" style="left:1518px;width:147px"><b style="left:33.30px;top:0px"><span style="letter-spacing:0.034px">Edit/Commands</span></b></div><div class="btn" style="left:1672px;width:121px;border:2px solid #0078d7"><b style="left:21.78px;top:-1px"><span style="letter-spacing:0.047px">Apply Changes</span></b></div><div class="btn" style="left:1801px;width:107px"><b style="left:34.34px;top:0px"><span style="letter-spacing:0.276px">Cancel</span></b></div>
<div id="menu" class="a"><div class="a gut"></div>
<div class="mi" style="top:1px"><b style="left:34.79px"><span style="letter-spacing:0.030px">Copy</span></b><b style="left:192.69px"><span style="letter-spacing:0.222px">Ctrl+C</span></b></div><div class="mi" style="top:23px"><b style="left:34.42px"><span style="letter-spacing:-0.334px">Paste</span></b><b style="left:193.79px"><span style="letter-spacing:0.098px">Ctrl+V</span></b></div><div class="mi" style="top:45px"><b style="left:34.42px"><span style="letter-spacing:-0.043px">Delete cells content</span></b><b style="left:209.92px"><span style="letter-spacing:0.260px">Del</span></b></div><div class="sep" style="top:70px"></div><div class="mi" style="top:73px"><b style="left:34.79px"><span style="letter-spacing:0.063px">Copy top cells down</span></b><b style="left:192.89px"><span style="letter-spacing:0.158px">Ctrl+D</span></b></div><div class="mi" style="top:95px"><b style="left:34.79px"><span style="letter-spacing:0.115px">Copy cells from left to right</span></b><b style="left:193.89px"><span style="letter-spacing:0.055px">Ctrl+R</span></b></div><div class="mi" style="top:117px"><b style="left:34.79px"><span style="letter-spacing:0.103px">Copy cells from right to left</span></b><b style="left:195.14px"><span style="letter-spacing:0.086px">Ctrl+L</span></b></div><div class="sep" style="top:142px"></div><div class="mi" style="top:145px"><b style="left:34.47px"><span style="letter-spacing:0.311px">Undo</span></b><b style="left:193.89px"><span style="letter-spacing:0.247px">Ctrl+Z</span></b></div><div class="mi" style="top:167px"><b style="left:34.42px"><span style="letter-spacing:-0.212px">Redo</span></b><b style="left:193.89px"><span style="letter-spacing:0.117px">Ctrl+Y</span></b></div>
</div>
</body></html>
